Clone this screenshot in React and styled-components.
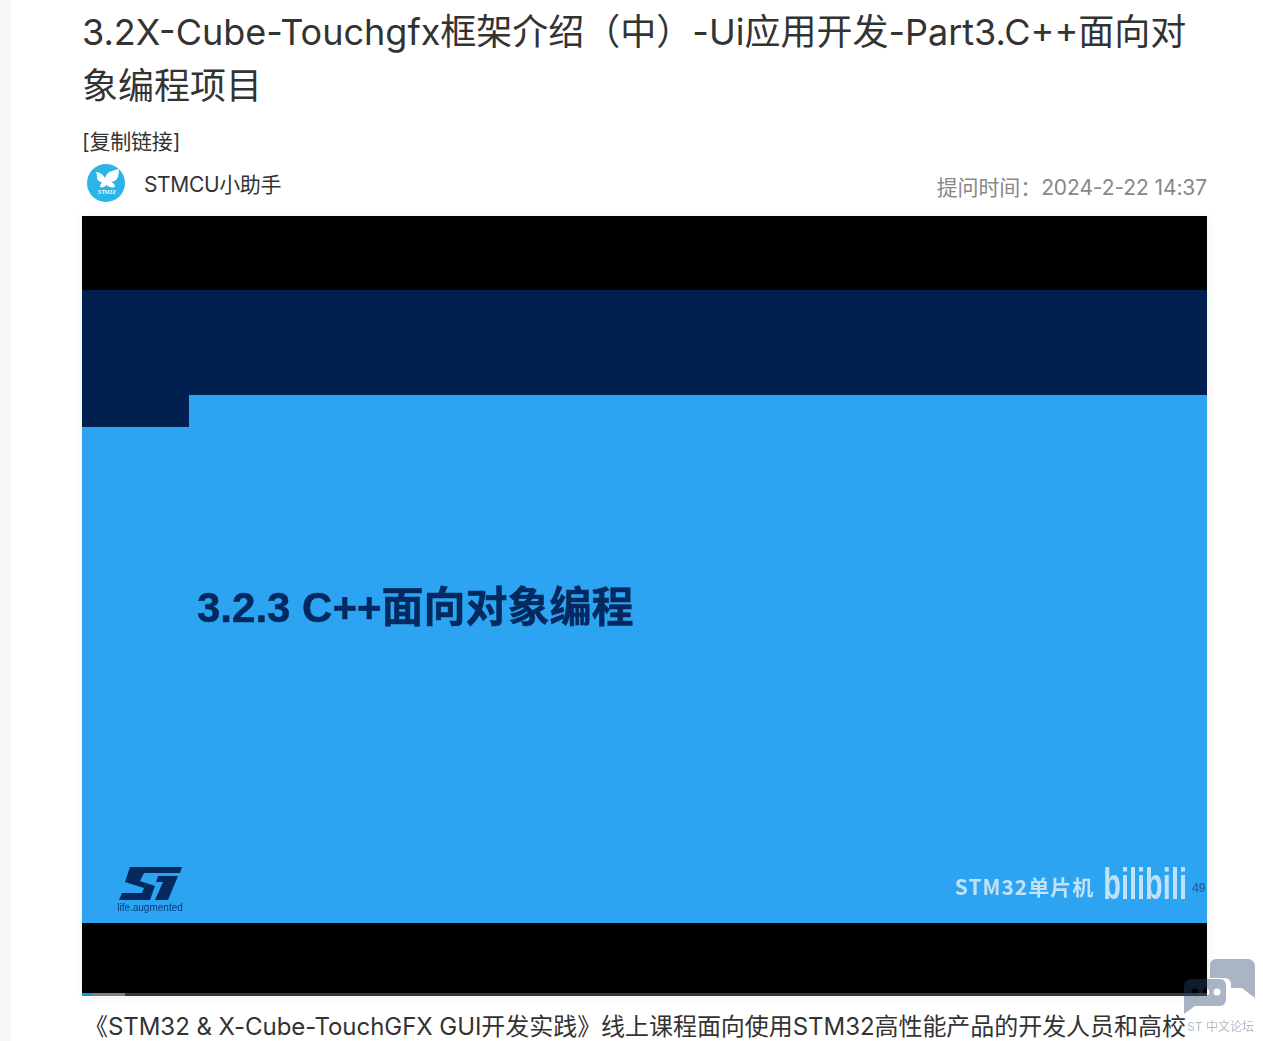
import React from "react";
import styled, { createGlobalStyle } from "styled-components";

const fontStack = `Inter, "Noto Sans CJK SC", sans-serif`;

const GlobalStyle = createGlobalStyle`
  html, body {
    margin: 0;
    height: 100%;
    overflow: hidden;
    background: #f7f7f7;
  }
`;

const Panel = styled.main`
  margin-left: 11px;
  height: 1041px;
  overflow: hidden;
  box-sizing: border-box;
  padding: 5px 56px 0 71px;
  background: #fff;
  font-family: ${fontStack};
  color: #333;
`;

const Title = styled.h1`
  margin: 0;
  font-size: 36px;
  line-height: 54px;
  font-weight: 400;
`;

const CopyLink = styled.a`
  display: block;
  margin-top: 14px;
  font-size: 21px;
  line-height: 30px;
  letter-spacing: -0.2px;
  color: #333;
`;

const MetaRow = styled.div`
  display: flex;
  align-items: center;
  height: 52px;
  padding-left: 5px;
`;

const Avatar = styled.svg`
  width: 38px;
  height: 38px;
  flex: none;
  filter: blur(0.3px);
`;

const Author = styled.span`
  margin-left: 19px;
  font-size: 21px;
  letter-spacing: -0.35px;
`;

const PostTime = styled.span`
  margin-left: auto;
  padding-top: 5px;
  font-size: 21px;
  letter-spacing: -0.1px;
  color: #888;
`;

const Video = styled.section`
  display: flex;
  flex-direction: column;
  height: 780px;
  margin-top: 7px;
  background: #000;
  box-shadow: 0 0 12px rgba(0, 0, 0, 0.06);
`;

const Letterbox = styled.div`
  flex: none;
  height: ${(p) => p.$height}px;
  background: #000;
`;

const NavyBand = styled.div`
  flex: none;
  height: 105px;
  background: #01204f;
`;

const Slide = styled.div`
  flex: none;
  height: 528px;
  display: flex;
  flex-direction: column;
  background: #2ca4f2;
`;

const Notch = styled.div`
  flex: none;
  width: 107px;
  height: 32px;
  background: #01204f;
`;

const SlideHeading = styled.h2`
  margin: 151px 0 0 115px;
  font-family: "Liberation Sans", "Noto Sans CJK SC", sans-serif;
  font-size: 42px;
  line-height: 60px;
  font-weight: 700;
  color: #04295f;
  -webkit-text-stroke: 0.5px #04295f;
  filter: blur(0.7px);
`;

const SlideFooter = styled.div`
  margin-top: auto;
  display: flex;
  align-items: flex-end;
  padding: 0 0 10px 34px;
`;

const StBrand = styled.div`
  display: flex;
  flex-direction: column;
  align-items: center;
  width: 68px;
  filter: blur(0.6px);
`;

const StTagline = styled.span`
  margin-top: 3px;
  font-family: "Liberation Sans", sans-serif;
  font-size: 10px;
  line-height: 10px;
  white-space: nowrap;
  color: #0a3a78;
`;

const Watermark = styled.div`
  margin-left: auto;
  display: flex;
  align-items: flex-end;
  margin-bottom: 12px;
  filter: blur(0.5px);
  color: #bfe2f8;
`;

const WatermarkLabel = styled.span`
  font-family: "Noto Sans CJK SC", sans-serif;
  font-size: 21px;
  line-height: 30px;
  font-weight: 700;
  letter-spacing: 1px;
`;

const WatermarkLogo = styled.span`
  margin-left: 9px;
  font-family: "Liberation Sans Narrow", "Liberation Sans", sans-serif;
  font-size: 29px;
  line-height: 30px;
  font-weight: 700;
  transform: translateY(6px) scaleY(1.55);
  transform-origin: bottom;
`;

const ViewCount = styled.span`
  width: 15px;
  margin-left: 5px;
  font-family: "Liberation Sans", sans-serif;
  font-size: 12px;
  line-height: 26px;
  font-weight: 700;
  white-space: nowrap;
  color: #1e6ba8;
`;

const Progress = styled.div`
  flex: none;
  height: 3px;
  display: flex;
  background: #3a3a3a;
`;

const ProgressPlayed = styled.div`
  width: 9px;
  background: #00a1d6;
`;

const ProgressBuffered = styled.div`
  width: 34px;
  background: #808080;
`;

const Intro = styled.p`
  margin: 15px 0 0;
  padding-left: 2px;
  font-size: 24px;
  line-height: 32px;
  height: 32px;
  letter-spacing: -0.05px;
  overflow: hidden;
  color: #333;
`;

const ForumBadge = styled.aside`
  position: fixed;
  right: 7px;
  bottom: 6px;
  width: 72px;
  display: flex;
  flex-direction: column;
  align-items: center;
`;

const BadgeIcon = styled.svg`
  width: 72px;
  height: 56px;
`;

const BadgeLabel = styled.span`
  box-sizing: border-box;
  width: 72px;
  margin-top: 4px;
  padding-right: 2px;
  font-family: ${fontStack};
  font-size: 12px;
  line-height: 16px;
  text-align: right;
  white-space: nowrap;
  direction: rtl;
  unicode-bidi: plaintext;
  color: #b5bcc8;
`;

const ButterflyAvatar = () => (
  <Avatar viewBox="0 0 38 38">
    <circle cx="19" cy="19" r="19" fill="#2bb4e6" />
    <path
      d="M9 8c4 0 7 3 9 6 1-3 3-6 7-7 3-1 5-2 7-2 0 4-1 8-2 10-2 2-4 3-6 3 3 1 4 3 4 5-3 1-6 0-9-2-1 2-4 3-6 2 0-2 1-4 2-5-3 0-5-2-5-4s0-4-1-6z"
      fill="#fff"
    />
    <text x="11" y="30" fontSize="5.5" fontWeight="700" fill="#e6f7fd" fontFamily="Liberation Sans">
      STM32
    </text>
  </Avatar>
);

const StLogo = () => (
  <svg width="63" height="33" viewBox="0 0 63 33">
    <path d="M11 0H63L61 6H25L21 14L36 19L31 33H0L3 26H23L25 21L6 15z" fill="#04295f" />
    <path d="M39 9H59L49 33H36L44 15H37z" fill="#04295f" />
  </svg>
);

const ChatBubbles = () => (
  <BadgeIcon viewBox="0 0 72 56">
    <path
      d="M32 0H64a7 7 0 0 1 7 7V39L58 29H47V25a6 6 0 0 0-6-6H26V6a6 6 0 0 1 6-6z"
      fill="rgba(40, 67, 107, 0.4)"
    />
    <path
      fillRule="evenodd"
      d="M7 20H36a6 6 0 0 1 6 6V41a6 6 0 0 1-6 6H11L0 55V27a7 7 0 0 1 7-7zM7.5 33a3.5 3.5 0 1 0 7 0a3.5 3.5 0 1 0-7 0zM18.5 33a3.5 3.5 0 1 0 7 0a3.5 3.5 0 1 0-7 0zM29.5 33a3.5 3.5 0 1 0 7 0a3.5 3.5 0 1 0-7 0z"
      fill="rgba(40, 67, 107, 0.4)"
    />
  </BadgeIcon>
);

const App = () => {
  return (
    <>
      <GlobalStyle />
      <Panel>
        <Title>3.2X-Cube-Touchgfx框架介绍（中）-Ui应用开发-Part3.C++面向对象编程项目</Title>
        <CopyLink>[复制链接]</CopyLink>
        <MetaRow>
          <ButterflyAvatar />
          <Author>STMCU小助手</Author>
          <PostTime>提问时间：2024-2-22 14:37</PostTime>
        </MetaRow>
        <Video>
          <Letterbox $height={74} />
          <NavyBand />
          <Slide>
            <Notch />
            <SlideHeading>3.2.3 C++面向对象编程</SlideHeading>
            <SlideFooter>
              <StBrand>
                <StLogo />
                <StTagline>life.augmented</StTagline>
              </StBrand>
              <Watermark>
                <WatermarkLabel>STM32单片机</WatermarkLabel>
                <WatermarkLogo>bilibili</WatermarkLogo>
                <ViewCount>49</ViewCount>
              </Watermark>
            </SlideFooter>
          </Slide>
          <Letterbox $height={70} />
          <Progress>
            <ProgressPlayed />
            <ProgressBuffered />
          </Progress>
        </Video>
        <Intro>《STM32 &amp; X-Cube-TouchGFX GUI开发实践》线上课程面向使用STM32高性能产品的开发人员和高校</Intro>
      </Panel>
      <ForumBadge>
        <ChatBubbles />
        <BadgeLabel>ST 中文论坛</BadgeLabel>
      </ForumBadge>
    </>
  );
};

export default App;
